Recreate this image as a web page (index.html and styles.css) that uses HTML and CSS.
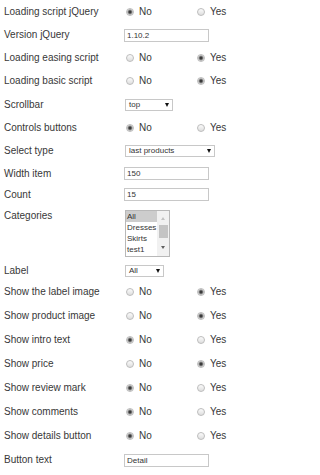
FILE: index.html
```html
<!DOCTYPE html>
<html>
<head>
<meta charset="utf-8">
<link rel="stylesheet" href="styles.css">
</head>
<body>
<form class="form">
  <div class="row h24">
    <span class="lbl">Loading script jQuery</span>
    <div class="radios">
      <label class="opt"><input type="radio" name="r1" checked>No</label>
      <label class="opt"><input type="radio" name="r1">Yes</label>
    </div>
  </div>
  <div class="row h22">
    <span class="lbl">Version jQuery</span>
    <input class="txt" type="text" value="1.10.2">
  </div>
  <div class="row h23">
    <span class="lbl">Loading easing script</span>
    <div class="radios">
      <label class="opt"><input type="radio" name="r3">No</label>
      <label class="opt"><input type="radio" name="r3" checked>Yes</label>
    </div>
  </div>
  <div class="row h24">
    <span class="lbl">Loading basic script</span>
    <div class="radios">
      <label class="opt"><input type="radio" name="r4">No</label>
      <label class="opt"><input type="radio" name="r4" checked>Yes</label>
    </div>
  </div>
  <div class="row h24">
    <span class="lbl">Scrollbar</span>
    <div class="sel w48"><span>top</span><i class="caret"></i></div>
  </div>
  <div class="row h22">
    <span class="lbl">Controls buttons</span>
    <div class="radios">
      <label class="opt"><input type="radio" name="r6" checked>No</label>
      <label class="opt"><input type="radio" name="r6">Yes</label>
    </div>
  </div>
  <div class="row h24">
    <span class="lbl">Select type</span>
    <div class="sel w90"><span>last products</span><i class="caret"></i></div>
  </div>
  <div class="row h21">
    <span class="lbl">Width item</span>
    <input class="txt" type="text" value="150">
  </div>
  <div class="row h21">
    <span class="lbl">Count</span>
    <input class="txt" type="text" value="15">
  </div>
  <div class="row cats">
    <span class="lbl">Categories</span>
    <div class="list">
      <div class="items">
        <div class="item picked">All</div>
        <div class="item">Dresses</div>
        <div class="item">Skirts</div>
        <div class="item">test1</div>
      </div>
      <div class="sb">
        <i class="up"></i>
        <i class="thumb"></i>
        <i class="down"></i>
      </div>
    </div>
  </div>
  <div class="row h19">
    <span class="lbl">Label</span>
    <div class="sel w39"><span>All</span><i class="caret"></i></div>
  </div>
  <div class="row h24">
    <span class="lbl">Show the label image</span>
    <div class="radios">
      <label class="opt"><input type="radio" name="r12">No</label>
      <label class="opt"><input type="radio" name="r12" checked>Yes</label>
    </div>
  </div>
  <div class="row h24">
    <span class="lbl">Show product image</span>
    <div class="radios">
      <label class="opt"><input type="radio" name="r13">No</label>
      <label class="opt"><input type="radio" name="r13" checked>Yes</label>
    </div>
  </div>
  <div class="row h24">
    <span class="lbl">Show intro text</span>
    <div class="radios">
      <label class="opt"><input type="radio" name="r14" checked>No</label>
      <label class="opt"><input type="radio" name="r14">Yes</label>
    </div>
  </div>
  <div class="row h24">
    <span class="lbl">Show price</span>
    <div class="radios">
      <label class="opt"><input type="radio" name="r15">No</label>
      <label class="opt"><input type="radio" name="r15" checked>Yes</label>
    </div>
  </div>
  <div class="row h24">
    <span class="lbl">Show review mark</span>
    <div class="radios">
      <label class="opt"><input type="radio" name="r16" checked>No</label>
      <label class="opt"><input type="radio" name="r16">Yes</label>
    </div>
  </div>
  <div class="row h24">
    <span class="lbl">Show comments</span>
    <div class="radios">
      <label class="opt"><input type="radio" name="r17" checked>No</label>
      <label class="opt"><input type="radio" name="r17">Yes</label>
    </div>
  </div>
  <div class="row h24">
    <span class="lbl">Show details button</span>
    <div class="radios">
      <label class="opt"><input type="radio" name="r18" checked>No</label>
      <label class="opt"><input type="radio" name="r18">Yes</label>
    </div>
  </div>
  <div class="row h24">
    <span class="lbl">Button text</span>
    <input class="txt" type="text" value="Detail">
  </div>
</form>
</body>
</html>
```
FILE: styles.css
```css
html, body {
  margin: 0;
  padding: 0;
  background: #fff;
}
body {
  font: 10px/12px "Liberation Sans", Arial, sans-serif;
  color: #383838;
}
.form {
  display: flex;
  flex-direction: column;
  margin: 0;
}
.row {
  display: grid;
  grid-template-columns: 124px 1fr;
  align-items: center;
  justify-items: start;
  height: 24px;
}
.h19 { height: 19px; }
.h21 { height: 21px; }
.h22 { height: 22px; }
.h23 { height: 23px; }
.h24 { height: 24px; }
.cats {
  height: 56px;
  align-items: start;
}
.lbl {
  padding-left: 4px;
  white-space: nowrap;
}
.cats .lbl {
  padding-top: 5px;
}
.radios {
  display: flex;
  padding-left: 2px;
}
.opt {
  display: flex;
  align-items: center;
  gap: 5px;
  width: 71px;
}
.opt input {
  -webkit-appearance: none;
  appearance: none;
  box-sizing: border-box;
  margin: 0;
  width: 8px;
  height: 8px;
  border: 1px solid #bdbdbd;
  border-radius: 50%;
  background: linear-gradient(#fbfbfb, #dedede);
}
.opt input:checked {
  background: radial-gradient(circle at center, #3a3a3a 0, #3a3a3a 1.1px, #8c8c8c 1.9px, #dadada 3px);
}
.txt {
  box-sizing: border-box;
  width: 85px;
  height: 13px;
  margin: 0;
  padding: 0 2px;
  border: 1px solid #c8c8c8;
  background: #fff;
  font: 8px/11px "Liberation Sans", Arial, sans-serif;
  color: #333;
  outline: none;
}
.sel {
  box-sizing: border-box;
  margin-left: 1px;
  height: 12px;
  border: 1px solid #c8c8c8;
  background: #fff;
  display: flex;
  align-items: center;
  justify-content: space-between;
  padding: 0 3px 0 3px;
  font-size: 8px;
  line-height: 10px;
  color: #333;
}
.w48 { width: 48px; }
.w90 { width: 90px; }
.w39 { width: 39px; }
.caret {
  width: 0;
  height: 0;
  border-left: 2.5px solid transparent;
  border-right: 2.5px solid transparent;
  border-top: 4px solid #111;
}
.list {
  box-sizing: border-box;
  margin-left: 1px;
  margin-top: 5px;
  width: 45px;
  height: 47px;
  border: 1px solid #b8b8b8;
  display: flex;
  background: #fff;
}
.items {
  flex: 1;
}
.item {
  font-size: 8px;
  line-height: 11px;
  padding-left: 1px;
  color: #333;
  white-space: nowrap;
  overflow: hidden;
}
.item.picked {
  background: #cdcdcd;
}
.sb {
  width: 12px;
  background: #f1f1f1;
  display: flex;
  flex-direction: column;
  align-items: center;
}
.up {
  margin-top: 6px;
  width: 0;
  height: 0;
  border-left: 2.5px solid transparent;
  border-right: 2.5px solid transparent;
  border-bottom: 3px solid #c2c2c2;
}
.thumb {
  margin-top: 5px;
  width: 9px;
  height: 13px;
  background: #c4c4c4;
}
.down {
  margin-top: auto;
  margin-bottom: 7px;
  width: 0;
  height: 0;
  border-left: 2.5px solid transparent;
  border-right: 2.5px solid transparent;
  border-top: 3px solid #606060;
}
```
